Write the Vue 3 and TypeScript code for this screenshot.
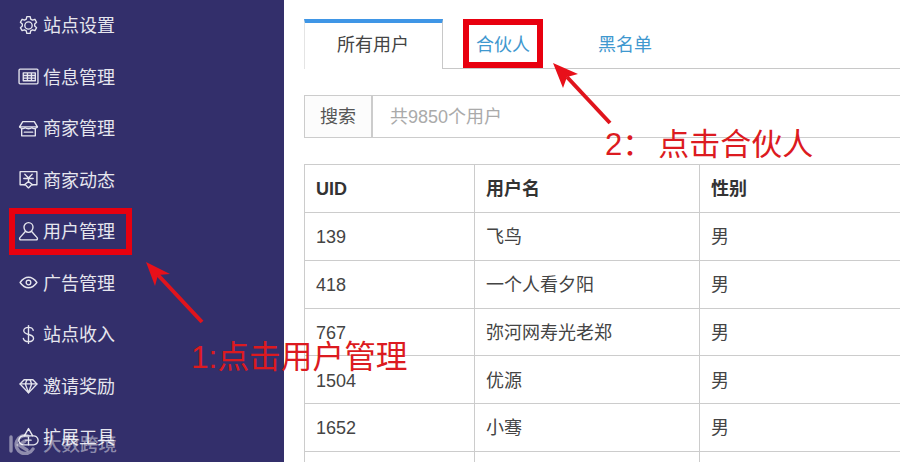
<template>
  <div class="page">
    <aside class="sidebar">
      <div v-for="item in menu" :key="item.label" class="menu-item">
        <svg class="menu-icon" viewBox="0 0 20 20" fill="none" stroke="currentColor" stroke-width="1.3" stroke-linecap="round" stroke-linejoin="round">
          <path v-for="d in item.paths" :key="d" :d="d" />
        </svg>
        <span class="menu-label">{{ item.label }}</span>
      </div>
    </aside>

    <main class="main">
      <div class="inner">
        <div class="tabs">
          <div class="tab active">所有用户</div>
          <div class="tab second">合伙人</div>
          <div class="tab">黑名单</div>
        </div>

        <div class="search">
          <div class="search-label">搜索</div>
          <div class="search-input">共9850个用户</div>
        </div>

        <table class="users">
          <thead>
            <tr>
              <th class="col-uid">UID</th>
              <th class="col-name">用户名</th>
              <th>性别</th>
            </tr>
          </thead>
          <tbody>
            <tr v-for="u in users" :key="u.uid">
              <td>{{ u.uid }}</td>
              <td>{{ u.name }}</td>
              <td>{{ u.sex }}</td>
            </tr>
          </tbody>
        </table>
      </div>
    </main>

    <!-- annotations drawn over the screenshot -->
    <div class="mark mark-menu"></div>
    <div class="mark mark-tab"></div>
    <svg class="arrows" viewBox="0 0 900 462">
      <path d="M202 322 L158 275" stroke="#e0141c" stroke-width="4" fill="none" />
      <path d="M146 262 L170 274 L158 275 L155 286 Z" fill="#e8101a" />
      <path d="M610 123 L567 77" stroke="#e0141c" stroke-width="4" fill="none" />
      <path d="M553 63 L578 74 L567 77 L563 88 Z" fill="#e8101a" />
    </svg>
    <div class="note note-one">1:点击用户管理</div>
    <div class="note note-two"><span class="note-num">2：</span>点击合伙人</div>

    <div class="watermark">
      <svg class="wm-logo" viewBox="0 0 30 24" fill="none" stroke="currentColor" stroke-width="3.4" stroke-linecap="round">
        <path d="M3 6 V20" />
        <path d="M25 18 A9 9 0 1 1 20 5" />
        <path d="M17 10 L11 14 L19 19" />
      </svg>
      <span>大数跨境</span>
    </div>
  </div>
</template>

<script setup lang="ts">
interface MenuItem {
  label: string;
  paths: string[];
}

interface User {
  uid: number;
  name: string;
  sex: string;
}

const menu: MenuItem[] = [
  {
    label: '站点设置',
    paths: [
      'M8.4 1.500h3.200l.5 2.400 1.700 1 2.300-.8 1.600 2.800-1.800 1.600v2l1.800 1.600-1.600 2.800-2.300-.8-1.700 1-.5 2.400H8.400l-.5-2.400-1.700-1-2.300.8-1.600-2.800 1.800-1.600v-2L2.300 6.900l1.600-2.800 2.300.8 1.700-1z',
      'M10 6.500a3.500 3.500 0 1 0 0 7 3.500 3.500 0 0 0 0-7z',
    ],
  },
  {
    label: '信息管理',
    paths: [
      'M2 3h16a1 1 0 0 1 1 1v12a1 1 0 0 1-1 1H2a1 1 0 0 1-1-1V4a1 1 0 0 1 1-1z',
      'M5 6.500h11.500v7.500H5zM5 9h11.500M5 11.500h11.500M9 6.500V14M12.800 6.500V14',
    ],
  },
  {
    label: '商家管理',
    paths: [
      'M4.500 3.500h11l3 5H1.500z',
      'M1.500 8.500c1.500 2 4 2 5.200.8 1.400 1.200 5.200 1.200 6.600 0 1.200 1.200 3.700 1.200 5.200-.8',
      'M3.500 10.500V17h13v-6.500',
      'M6 13.500h8',
    ],
  },
  {
    label: '商家动态',
    paths: [
      'M2 2.500h16v12.500h-5l-3 3-3-3H2z',
      'M6.500 5l3.500 3.500L13.500 5M5.500 9h9M10 8.500V12M6 15l4-3 4 3',
    ],
  },
  {
    label: '用户管理',
    paths: [
      'M10 1.500a4.300 4.300 0 0 1 4.300 4.300c0 2.600-1.800 5-4.300 5s-4.300-2.400-4.300-5A4.300 4.300 0 0 1 10 1.500z',
      'M7 10L1.800 15.800c-.7 1-.2 2.200 1 2.200h14.400c1.200 0 1.700-1.200 1-2.200L13 10',
    ],
  },
  {
    label: '广告管理',
    paths: [
      'M2 10C4.500 6.500 7.300 5 10 5s5.500 1.500 8 5c-2.500 3.500-5.300 5-8 5s-5.500-1.500-8-5z',
      'M10 7.800a2.200 2.200 0 1 0 0 4.400 2.200 2.200 0 0 0 0-4.400z',
    ],
  },
  {
    label: '站点收入',
    paths: [
      'M14.500 6c-.5-1.800-2.300-2.800-4.500-2.800-2.600 0-4.500 1.300-4.500 3.300 0 4.500 9.300 2.500 9.300 7 0 2-2 3.300-4.800 3.300-2.500 0-4.400-1.100-4.900-3',
      'M10 1.500v17',
    ],
  },
  {
    label: '邀请奖励',
    paths: [
      'M5.800 4.500h8.400l3.800 4L10 17 2 8.500z',
      'M2 8.500h16M7 8.500L10 17l3-8.500M7 8.500L8.500 4.500M13 8.500L11.500 4.500',
    ],
  },
  {
    label: '扩展工具',
    paths: [
      'M10 1.500l4 7H6z',
      'M6 8.500a4.300 4.300 0 1 0-.5 8.500h9a4.300 4.300 0 1 0-.5-8.500',
      'M7.500 12.500h5M10 10v7',
    ],
  },
];

const users: User[] = [
  { uid: 139, name: '飞鸟', sex: '男' },
  { uid: 418, name: '一个人看夕阳', sex: '男' },
  { uid: 767, name: '弥河网寿光老郑', sex: '男' },
  { uid: 1504, name: '优源', sex: '男' },
  { uid: 1652, name: '小骞', sex: '男' },
  { uid: 1788, name: '', sex: '' },
];
</script>

<style>
html,
body {
  margin: 0;
  background: #fff;
}
</style>

<style scoped>
.page {
  position: relative;
  display: flex;
  width: 900px;
  height: 462px;
  overflow: hidden;
  font-family: "Liberation Sans", "Noto Sans CJK SC", sans-serif;
  color: #333;
  background: #fff;
}

.sidebar {
  flex: 0 0 284px;
  display: grid;
  grid-auto-rows: 51.5px;
  background: #332f6b;
  color: #e6e6ee;
}

.menu-item {
  display: flex;
  align-items: center;
  gap: 4px;
  padding-left: 18px;
  font-size: 18px;
}

.menu-label {
  margin-bottom: 3px;
}

.menu-icon {
  width: 21px;
  height: 21px;
  flex: none;
  margin-bottom: 1px;
}

.main {
  flex: 1;
  min-width: 0;
  padding: 19px 0 0 20px;
}

.inner {
  width: 700px;
}

.tabs {
  display: flex;
  height: 50px;
  box-sizing: border-box;
  border-bottom: 1px solid #c8c8c8;
  font-size: 18px;
  line-height: 24px;
  color: #3f98cf;
}

.tab {
  height: 49px;
  box-sizing: border-box;
  padding: 14px 34px 0;
}

.tab.second {
  padding-left: 33px;
}

.tab.active {
  height: 50px;
  padding: 10px 33px 0 32px;
  color: #444;
  background: #fff;
  border-top: 4px solid #3f96e6;
  border-left: 1px solid #e4e4e4;
  border-right: 1px solid #c8c8c8;
}

.search {
  display: flex;
  height: 43px;
  box-sizing: border-box;
  margin-top: 26px;
  border: 1px solid #ccc;
  font-size: 18px;
  line-height: 42px;
}

.search-label {
  width: 68px;
  box-sizing: border-box;
  text-align: center;
  border-right: 2px solid #ccc;
  background: #fcfcfc;
  color: #555;
}

.search-input {
  flex: 1;
  padding-left: 17px;
  color: #aaa;
}

.users {
  margin-top: 26px;
  width: 100%;
  border-collapse: collapse;
  table-layout: fixed;
  font-size: 18px;
  line-height: 24px;
}

.users th,
.users td {
  box-sizing: border-box;
  height: 47.75px;
  border: 1px solid #ccc;
  text-align: left;
  color: #444;
}

.users td {
  padding: 2px 11px 0;
}

.users th {
  height: 48px;
  padding: 0 11px;
  font-weight: 700;
  color: #333;
}

.col-uid {
  width: 170px;
}

.col-name {
  width: 225px;
}

.mark {
  position: absolute;
  box-sizing: border-box;
  border: 6px solid #e8000f;
}

.mark-menu {
  left: 9px;
  top: 208px;
  width: 123px;
  height: 47px;
}

.mark-tab {
  left: 463px;
  top: 19px;
  width: 80px;
  height: 49px;
}

.arrows {
  position: absolute;
  left: 0;
  top: 0;
  width: 900px;
  height: 462px;
  pointer-events: none;
}

.note {
  position: absolute;
  line-height: 36px;
  color: #dc1a20;
  white-space: nowrap;
}

.note-one {
  left: 191px;
  top: 339px;
  font-size: 31.7px;
}

.note-two {
  left: 605px;
  top: 127px;
  font-size: 31px;
}

.note-num {
  margin-right: 5px;
}

.watermark {
  position: absolute;
  left: 8px;
  top: 430px;
  display: flex;
  align-items: center;
  gap: 5px;
  font-size: 18.5px;
  font-weight: 500;
  color: rgba(255, 255, 255, 0.45);
}

.wm-logo {
  width: 30px;
  height: 24px;
}
</style>
